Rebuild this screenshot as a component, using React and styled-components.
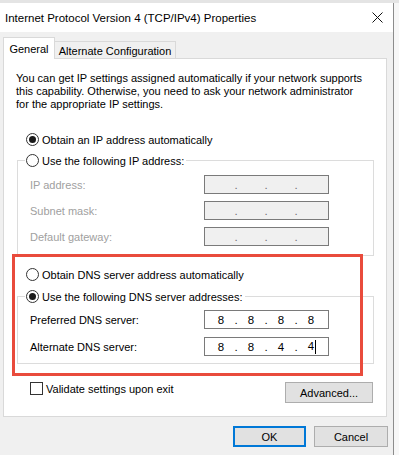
import styled, { createGlobalStyle } from 'styled-components';

const GlobalStyle = createGlobalStyle`
  html, body {
    margin: 0;
    padding: 0;
    background: #f0f0f0;
  }
  * {
    box-sizing: border-box;
  }
`;

const FONT = `"Liberation Sans", Arial, sans-serif`;

const Screen = styled.div`
  width: 399px;
  height: 455px;
  overflow: hidden;
  display: flex;
  flex-direction: column;
  font-family: ${FONT};
  font-size: 11px;
  color: #000;
`;

const BackdropTop = styled.div`
  height: 3px;
  background: #e4e4e4;
  flex: none;
`;

const Stage = styled.div`
  flex: 1;
  display: flex;
`;

const Dialog = styled.div`
  width: 394px;
  background: #f0f0f0;
  border-right: 1px solid #8c8c8c;
  display: flex;
  flex-direction: column;
`;

const BackdropSide = styled.div`
  flex: 1;
  background: #f7f7f7;
`;

const TitleBar = styled.div`
  height: 29px;
  background: #fff;
  display: flex;
  align-items: center;
  justify-content: space-between;
  padding: 0 10px 0 5px;
  font-size: 11.5px;
  flex: none;
`;

const CloseIcon = () => (
  <svg width="11" height="11" viewBox="0 0 11 11">
    <path d="M0.5 0.5 L10.5 10.5 M10.5 0.5 L0.5 10.5" stroke="#111" strokeWidth="1" fill="none" />
  </svg>
);

const TabBar = styled.div`
  display: flex;
  align-items: flex-end;
  margin-top: 5px;
  padding-left: 3px;
`;

const Tab = styled.div`
  position: relative;
  z-index: 1;
  display: flex;
  align-items: center;
  justify-content: center;
  white-space: nowrap;
  border: 1px solid #d9d9d9;
  border-bottom: none;
  background: ${(p) => (p.$active ? '#fff' : '#f0f0f0')};
  height: ${(p) => (p.$active ? '22px' : '17px')};
  width: ${(p) => p.$w}px;
  margin-bottom: ${(p) => (p.$active ? '-1px' : '0')};
  padding-top: ${(p) => (p.$active ? '0' : '1px')};
  & + & {
    border-left: none;
  }
`;

const Panel = styled.div`
  position: relative;
  margin: 0 6px 0 3px;
  background: #fff;
  border: 1px solid #d9d9d9;
  padding: 13px 0 13px 12px;
`;

const Intro = styled.p`
  margin: 0;
  line-height: 13px;
  white-space: nowrap;
`;

const RadioRow = styled.label`
  display: flex;
  align-items: center;
  gap: 3px;
  height: 17px;
  white-space: nowrap;
  padding-left: 10px;
  margin-top: ${(p) => p.$mt || 0}px;
`;

const Radio = styled.span`
  position: relative;
  width: 13px;
  height: 13px;
  border-radius: 50%;
  border: 1px solid #333;
  background: #fff;
  flex: none;
  &::after {
    content: '';
    display: ${(p) => (p.$checked ? 'block' : 'none')};
    position: absolute;
    left: 2px;
    top: 2px;
    width: 7px;
    height: 7px;
    border-radius: 50%;
    background: #1a1a1a;
  }
`;

const Group = styled.fieldset`
  margin: ${(p) => p.$mt}px 0 0 1px;
  width: 357px;
  min-width: 0;
  border: 1px solid #dcdcdc;
  padding: ${(p) => p.$pt}px 44px ${(p) => p.$pb}px 12px;
  display: flex;
  flex-direction: column;
  gap: ${(p) => p.$gap}px;
`;

const Legend = styled.legend`
  padding: 0 2px 0 0;
  margin-left: -5px;
  background: #fff;
  & > label {
    padding-left: 1px;
  }
`;

const FieldRow = styled.div`
  display: flex;
  align-items: center;
  justify-content: space-between;
  white-space: nowrap;
  height: 19px;
  color: ${(p) => (p.$disabled ? '#a0a0a0' : '#000')};
`;

const AddressBox = styled.div`
  width: 125px;
  height: 19px;
  border: 1px solid #7a7a7a;
  background: ${(p) => (p.$disabled ? '#f0f0f0' : '#fff')};
  display: flex;
  align-items: center;
  padding-left: 4px;
  font-size: 11.5px;
`;

const Octet = styled.span`
  width: 24px;
  text-align: center;
`;

const Dot = styled.span`
  width: 6px;
  text-align: center;
  color: ${(p) => (p.$disabled ? '#6f6f6f' : '#000')};
`;

const Caret = styled.span`
  display: inline-block;
  width: 1px;
  height: 14px;
  background: #000;
  vertical-align: middle;
  margin-left: 1px;
  margin-right: -2px;
`;

const Address = ({ parts, disabled, caret }) => (
  <AddressBox $disabled={disabled}>
    {parts.map((part, i) => (
      <span key={i} style={{ display: 'contents' }}>
        {i > 0 && <Dot $disabled={disabled}>.</Dot>}
        <Octet>
          {part}
          {caret && i === parts.length - 1 && <Caret />}
        </Octet>
      </span>
    ))}
  </AddressBox>
);

const BottomRow = styled.div`
  display: flex;
  align-items: flex-start;
  justify-content: space-between;
  width: 357px;
  margin: 18px 0 0 1px;
  padding: 0 1px 0 13px;
`;

const CheckRow = styled.label`
  display: flex;
  align-items: center;
  gap: 3px;
  height: 13px;
  white-space: nowrap;
`;

const Checkbox = styled.span`
  width: 13px;
  height: 13px;
  border: 1px solid #333;
  background: #fff;
  flex: none;
`;

const Button = styled.button`
  font-family: ${FONT};
  font-size: 11px;
  color: #000;
  width: ${(p) => p.$w}px;
  height: 21px;
  padding: 0;
  background: #e1e1e1;
  border: ${(p) => (p.$default ? '2px solid #0078d7' : '1px solid #adadad')};
`;

const Highlight = styled.div`
  position: absolute;
  left: 8px;
  top: 195px;
  width: 351px;
  height: 122px;
  border: 3px solid #e94b3c;
  pointer-events: none;
`;

const Footer = styled.div`
  display: flex;
  justify-content: flex-end;
  gap: 8px;
  margin-top: 9px;
  padding-right: 5px;
`;

const empty = ['', '', '', ''];

export default function App() {
  return (
    <Screen>
      <GlobalStyle />
      <BackdropTop />
      <Stage>
        <Dialog>
          <TitleBar>
            <span>Internet Protocol Version 4 (TCP/IPv4) Properties</span>
            <CloseIcon />
          </TitleBar>
          <TabBar>
            <Tab $active $w={52}>General</Tab>
            <Tab $w={121}>Alternate Configuration</Tab>
          </TabBar>
          <Panel>
            <Intro>
              You can get IP settings assigned automatically if your network supports
              <br />
              this capability. Otherwise, you need to ask your network administrator
              <br />
              for the appropriate IP settings.
            </Intro>

            <RadioRow $mt={20}>
              <Radio $checked />
              Obtain an IP address automatically
            </RadioRow>
            <Group $mt={4} $pt={6} $pb={9} $gap={7}>
              <Legend>
                <RadioRow>
                  <Radio />
                  Use the following IP address:
                </RadioRow>
              </Legend>
              <FieldRow $disabled>
                IP address:
                <Address parts={empty} disabled />
              </FieldRow>
              <FieldRow $disabled>
                Subnet mask:
                <Address parts={empty} disabled />
              </FieldRow>
              <FieldRow $disabled>
                Default gateway:
                <Address parts={empty} disabled />
              </FieldRow>
            </Group>

            <RadioRow $mt={10}>
              <Radio />
              Obtain DNS server address automatically
            </RadioRow>
            <Group $mt={5} $pt={5} $pb={7} $gap={8}>
              <Legend>
                <RadioRow>
                  <Radio $checked />
                  Use the following DNS server addresses:
                </RadioRow>
              </Legend>
              <FieldRow>
                Preferred DNS server:
                <Address parts={['8', '8', '8', '8']} />
              </FieldRow>
              <FieldRow>
                Alternate DNS server:
                <Address parts={['8', '8', '4', '4']} caret />
              </FieldRow>
            </Group>

            <BottomRow>
              <CheckRow>
                <Checkbox />
                Validate settings upon exit
              </CheckRow>
              <Button $w={88}>Advanced...</Button>
            </BottomRow>

            <Highlight />
          </Panel>
          <Footer>
            <Button $w={73} $default>OK</Button>
            <Button $w={74}>Cancel</Button>
          </Footer>
        </Dialog>
        <BackdropSide />
      </Stage>
    </Screen>
  );
}
